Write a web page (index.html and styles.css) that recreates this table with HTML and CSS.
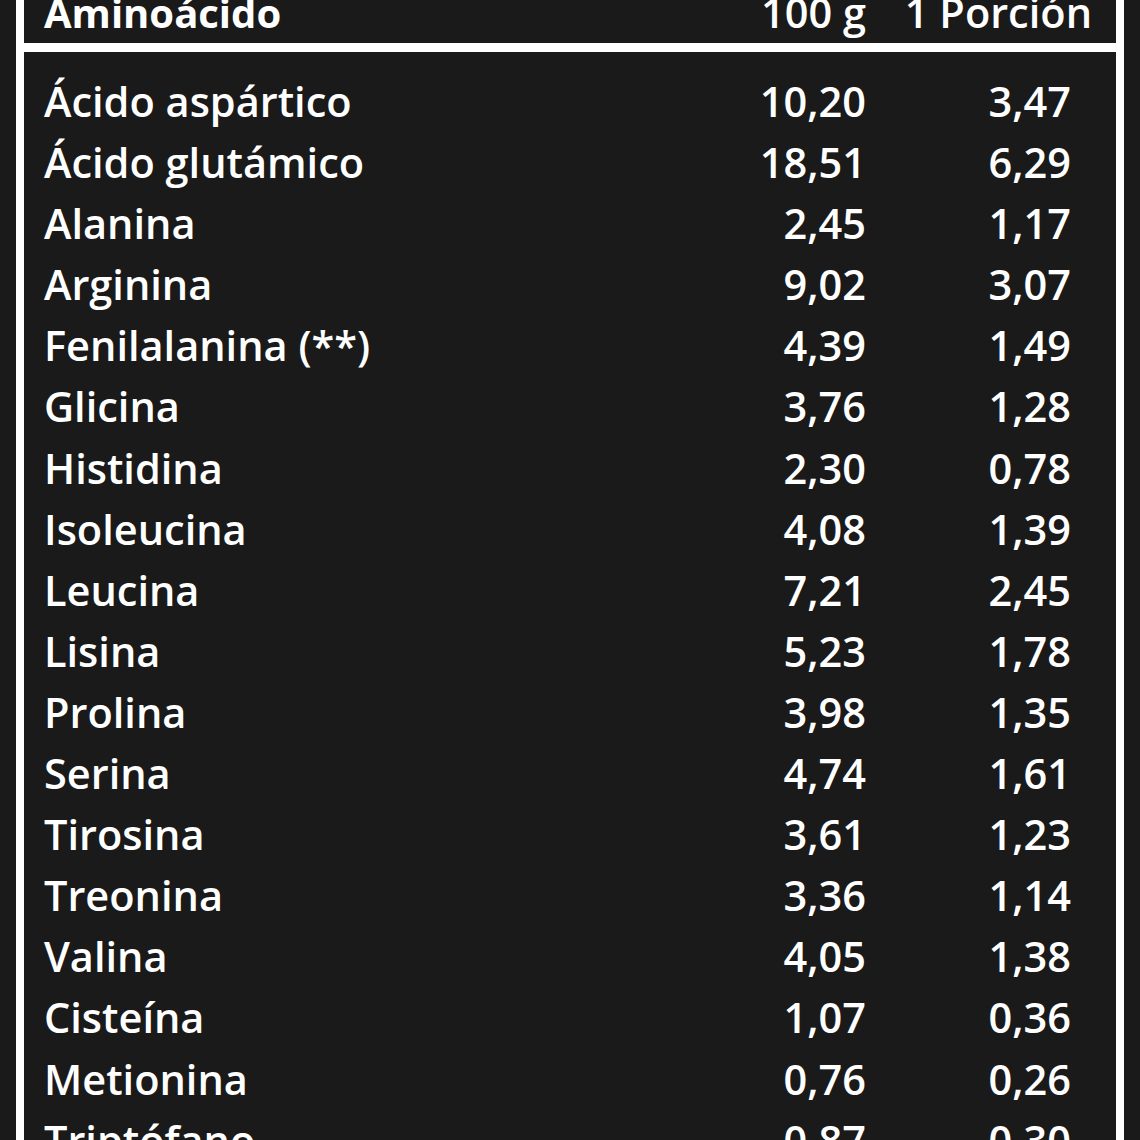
FILE: index.html
```html
<!DOCTYPE html>
<html lang="es">
<head>
<meta charset="utf-8">
<link rel="stylesheet" href="styles.css">
</head>
<body>
<div class="panel">
  <div class="head">
    <div class="name strong">Aminoácido</div>
    <div class="c2">100 g</div>
    <div class="c3 hc3">1 Porción</div>
  </div>
  <div class="rows">
    <div class="row"><div class="name">Ácido aspártico</div><div class="c2">10,20</div><div class="c3">3,47</div></div>
    <div class="row"><div class="name">Ácido glutámico</div><div class="c2">18,51</div><div class="c3">6,29</div></div>
    <div class="row"><div class="name">Alanina</div><div class="c2">2,45</div><div class="c3">1,17</div></div>
    <div class="row"><div class="name">Arginina</div><div class="c2">9,02</div><div class="c3">3,07</div></div>
    <div class="row"><div class="name">Fenilalanina (**)</div><div class="c2">4,39</div><div class="c3">1,49</div></div>
    <div class="row"><div class="name">Glicina</div><div class="c2">3,76</div><div class="c3">1,28</div></div>
    <div class="row"><div class="name">Histidina</div><div class="c2">2,30</div><div class="c3">0,78</div></div>
    <div class="row"><div class="name">Isoleucina</div><div class="c2">4,08</div><div class="c3">1,39</div></div>
    <div class="row"><div class="name">Leucina</div><div class="c2">7,21</div><div class="c3">2,45</div></div>
    <div class="row"><div class="name">Lisina</div><div class="c2">5,23</div><div class="c3">1,78</div></div>
    <div class="row"><div class="name">Prolina</div><div class="c2">3,98</div><div class="c3">1,35</div></div>
    <div class="row"><div class="name">Serina</div><div class="c2">4,74</div><div class="c3">1,61</div></div>
    <div class="row"><div class="name">Tirosina</div><div class="c2">3,61</div><div class="c3">1,23</div></div>
    <div class="row"><div class="name">Treonina</div><div class="c2">3,36</div><div class="c3">1,14</div></div>
    <div class="row"><div class="name">Valina</div><div class="c2">4,05</div><div class="c3">1,38</div></div>
    <div class="row"><div class="name">Cisteína</div><div class="c2">1,07</div><div class="c3">0,36</div></div>
    <div class="row"><div class="name">Metionina</div><div class="c2">0,76</div><div class="c3">0,26</div></div>
    <div class="row"><div class="name">Triptófano</div><div class="c2">0,87</div><div class="c3">0,30</div></div>
  </div>
</div>
</body>
</html>
```
FILE: styles.css
```css
html, body {
  margin: 0;
  padding: 0;
  background: #1a1a1a;
  height: 1140px;
  overflow: hidden;
}
body {
  font-family: "Open Sans", "Noto Sans", sans-serif;
  font-size: 41.5px;
  font-weight: 600;
  color: #ffffff;
}
.panel {
  margin: 0 16px;
  border-left: 8px solid #ffffff;
  border-right: 8px solid #ffffff;
  min-height: 1200px;
}
.head {
  display: flex;
  line-height: 25px;
  padding: 0 0 18px 20px;
  border-bottom: 9px solid #ffffff;
}
.strong {
  font-size: 40px;
  font-weight: 700;
}
.rows {
  padding-top: 19px;
}
.row {
  display: flex;
  line-height: 61.1px;
  padding-left: 20px;
}
.name {
  flex: 1;
  white-space: nowrap;
}
.c2 {
  width: 200px;
  text-align: right;
  white-space: nowrap;
}
.c3 {
  width: 205px;
  padding-right: 45px;
  text-align: right;
  white-space: nowrap;
}
.hc3 {
  width: 226px;
  padding-right: 24px;
}
```
